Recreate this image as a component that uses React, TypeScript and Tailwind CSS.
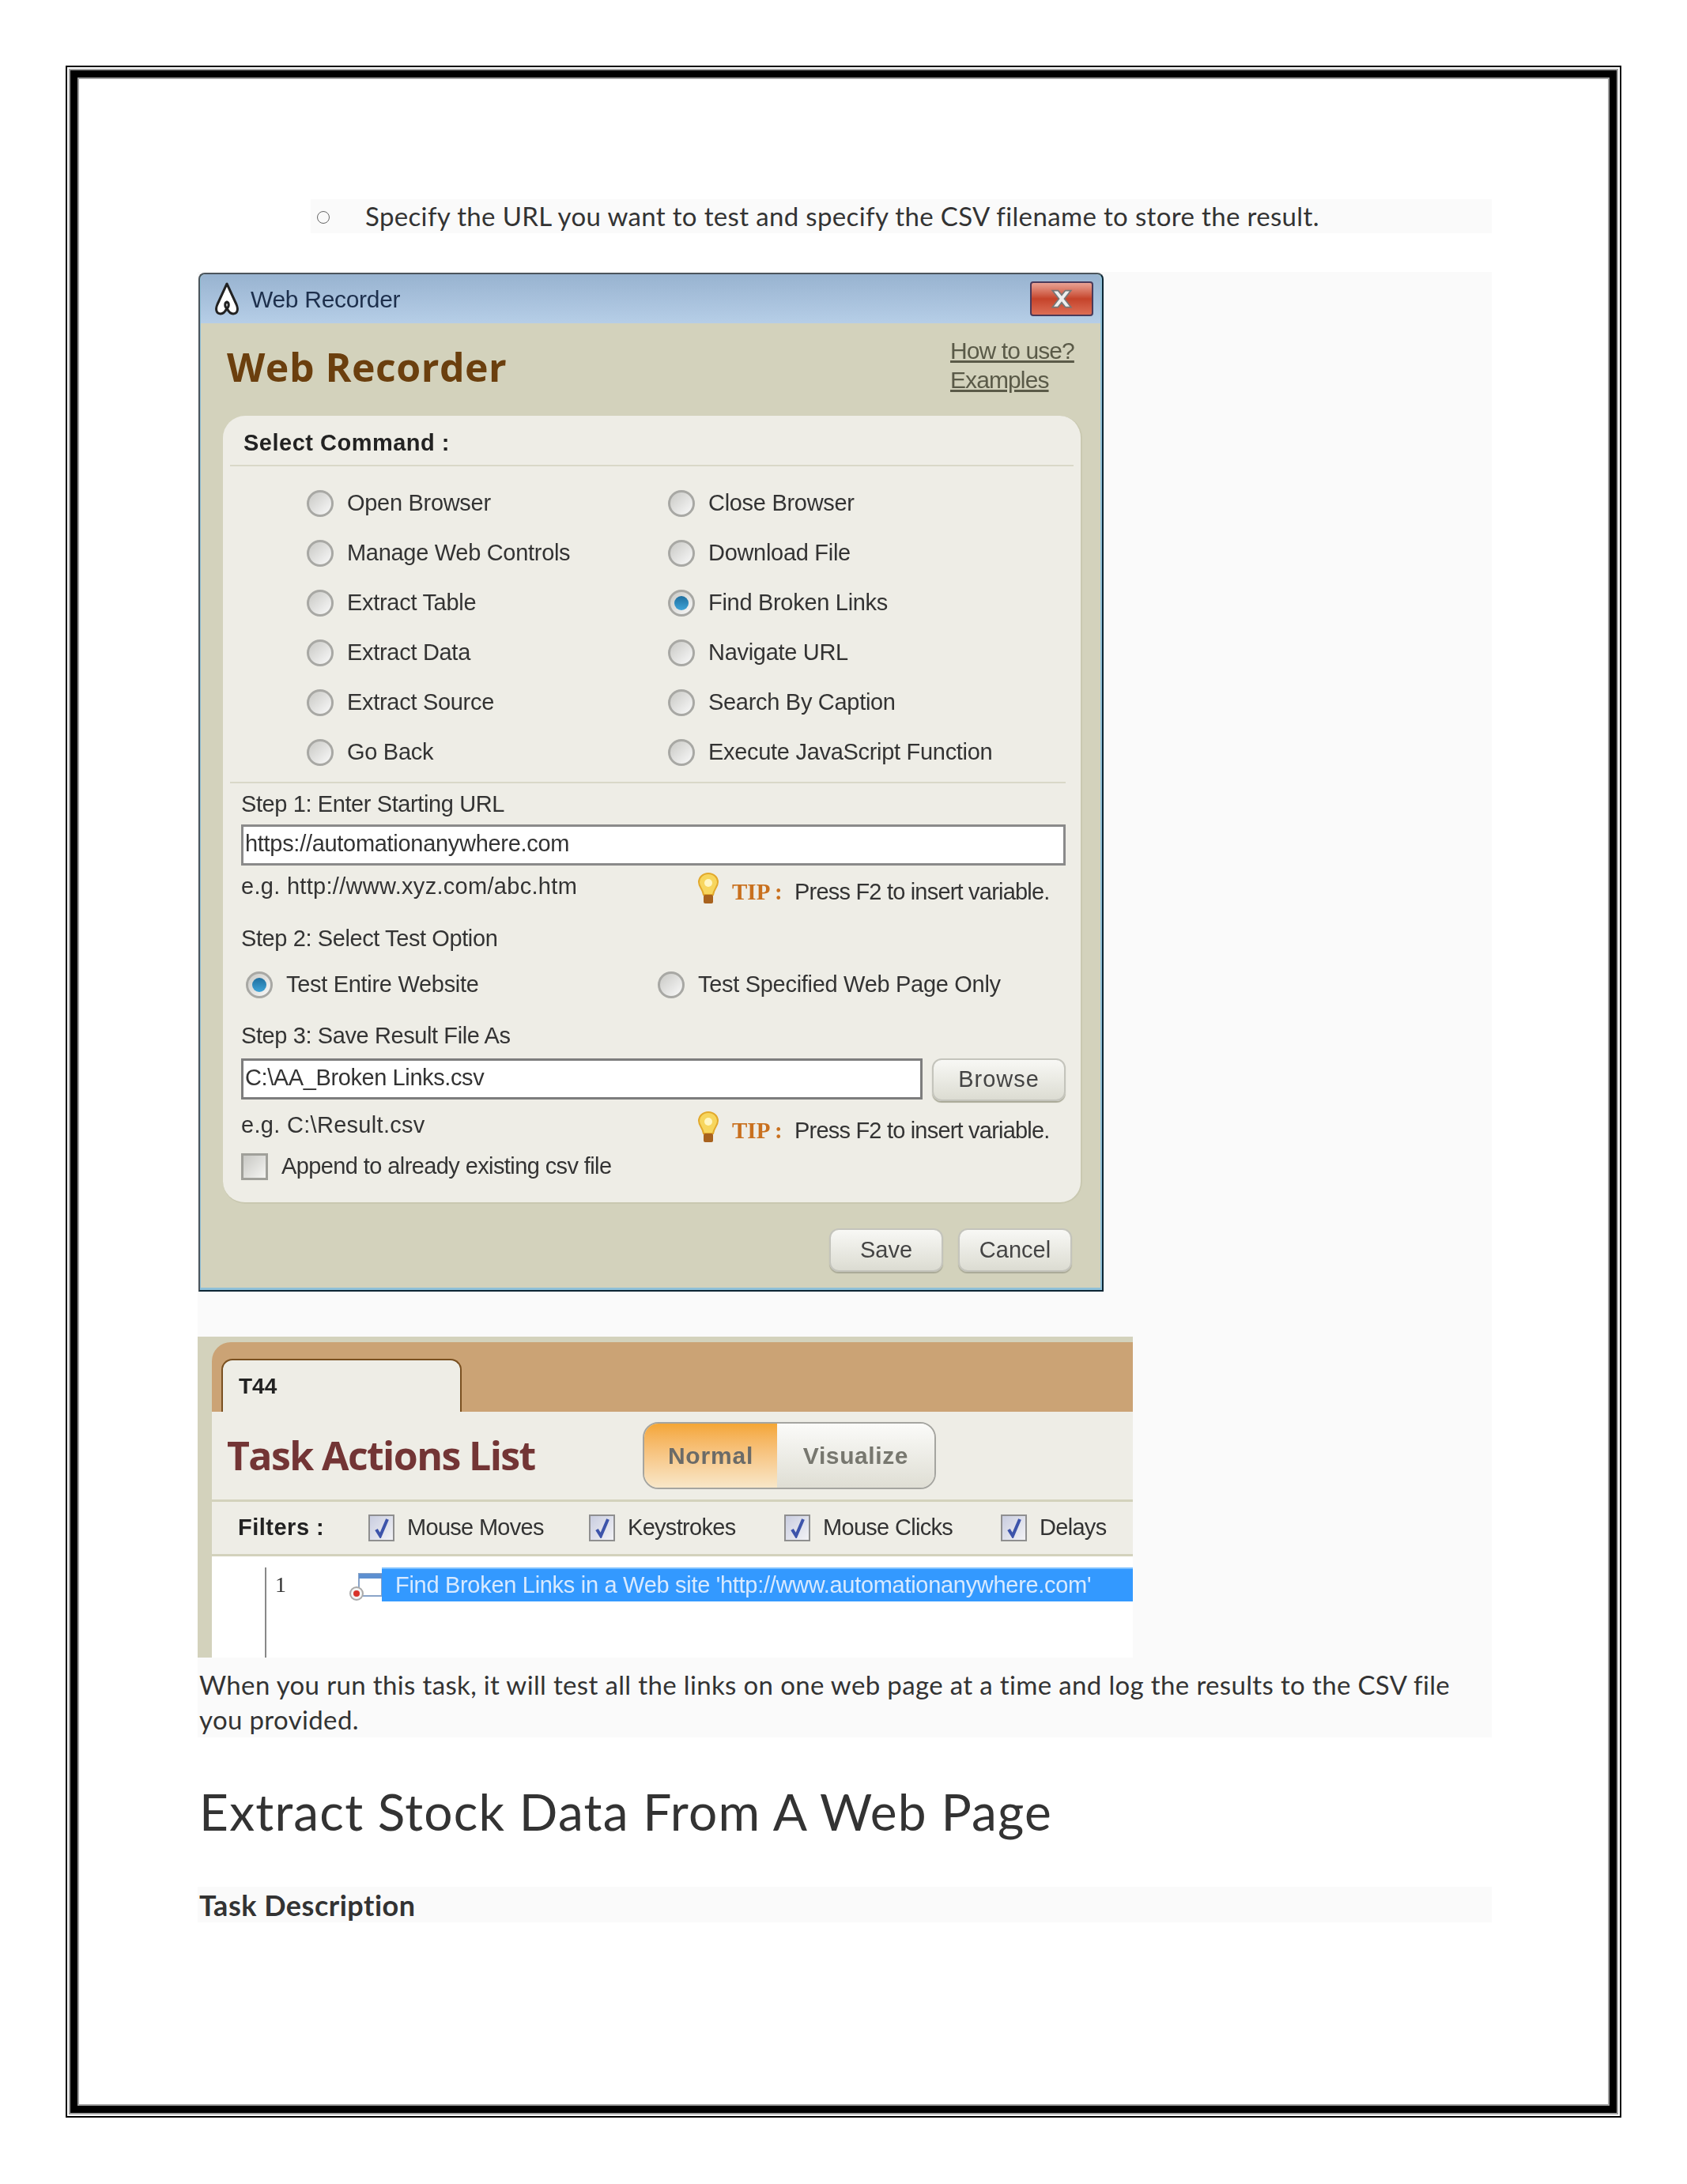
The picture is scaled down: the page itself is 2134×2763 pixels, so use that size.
import React from 'react';

const UI = "font-['Liberation_Sans',sans-serif]";
const DOC = "font-['Lato','Open_Sans',sans-serif]";

function Radio({ checked = false }: { checked?: boolean }) {
  return (
    <span className="flex h-[34px] w-[34px] shrink-0 items-center justify-center rounded-full border-[3px] border-[#a8a8a4] bg-gradient-to-br from-[#c9c9c5] to-[#fafafa]">
      {checked && <span className="h-[18px] w-[18px] rounded-full bg-gradient-to-b from-[#1f6f9f] to-[#3fa4d8]" />}
    </span>
  );
}

function RadioOption({ label, checked }: { label: string; checked?: boolean }) {
  return (
    <div className="flex items-center gap-[17px] text-[29px] tracking-[-0.3px] text-[#333]">
      <Radio checked={checked} />
      <span>{label}</span>
    </div>
  );
}

function Bulb() {
  return (
    <svg width="26" height="41" viewBox="0 0 26 41" className="shrink-0">
      <path d="M13 1C6 1 1 6 1 12c0 6 5 9 6 16h12c1-7 6-10 6-16C25 6 20 1 13 1z" fill="#f7d65e" stroke="#e2a92c" strokeWidth="2" />
      <circle cx="13" cy="13" r="5" fill="#fff6c4" />
      <rect x="7" y="28" width="12" height="11" rx="2" fill="#a8621e" />
    </svg>
  );
}

function HintRow({ example, className }: { example: string; className: string }) {
  return (
    <div className={`flex text-[29px] text-[#333] ${className}`}>
      <div className="w-[578px] pt-[6px] leading-[40px] tracking-[0.3px]">{example}</div>
      <div className="pt-[9px]"><Bulb /></div>
      <div className="ml-[17px] flex pt-[13px] leading-[40px]">
        <span className="w-[79px] font-['Liberation_Serif',serif] text-[29px] font-bold text-[#c9701e]">TIP :</span>
        <span className="tracking-[-0.8px]">Press F2 to insert variable.</span>
      </div>
    </div>
  );
}

function Btn({ label, className }: { label: string; className: string }) {
  return (
    <div className={`flex items-center justify-center rounded-[12px] border-2 border-[#c4c4bc] bg-gradient-to-b from-[#f8f8f5] to-[#dcdcd2] text-[29px] text-[#444] shadow-[0_2px_1px_#a9a997] ${className}`}>
      {label}
    </div>
  );
}

function Tick() {
  return (
    <span className="flex h-[34px] w-[33px] shrink-0 items-center justify-center border-2 border-[#8f8f8f] bg-gradient-to-br from-[#c9cde0] to-[#f2f2f5]">
      <svg width="20" height="26" viewBox="0 0 20 26">
        <path d="M3 15l5 8L17 2" fill="none" stroke="#3d54ab" strokeWidth="4" />
      </svg>
    </span>
  );
}

function Filter({ label }: { label: string }) {
  return (
    <div className="flex items-center gap-[16px]">
      <Tick />
      <span>{label}</span>
    </div>
  );
}

const commands: [string, string, boolean?][] = [
  ['Open Browser', 'Close Browser'],
  ['Manage Web Controls', 'Download File'],
  ['Extract Table', 'Find Broken Links', true],
  ['Extract Data', 'Navigate URL'],
  ['Extract Source', 'Search By Caption'],
  ['Go Back', 'Execute JavaScript Function'],
];

function WebRecorder() {
  return (
    <div className={`ml-px h-[1289px] w-[1145px] rounded-t-[8px] border-2 border-[#4c555c] border-r-[#0c2533] border-b-[#0c2533] bg-[#8fc0d8] blur-[0.6px] ${UI}`}>
      <div className="ml-[1px] h-[1282px] w-[1138px] overflow-hidden rounded-t-[6px] bg-[#d3d2bc]">
        {/* title bar */}
        <div className="flex h-[62px] items-center bg-gradient-to-b from-[#98b3d0] to-[#b6cee7] pl-[16px] pr-[9px]">
          <svg width="34" height="42" viewBox="0 0 34 42">
            <path d="M17 2L5 28c-3 7-1 12 4 12 4 0 6-3 8-7 2 4 4 7 8 7 5 0 7-5 4-12z" fill="#fff" stroke="#222" strokeWidth="3" strokeLinejoin="round" />
            <path d="M17 33c-3-2-3-7 0-8 3 1 3 6 0 8z" fill="none" stroke="#222" strokeWidth="3" />
          </svg>
          <span className="ml-[13px] text-[30px] tracking-[-0.3px] text-[#1d2f4c]">Web Recorder</span>
          <div className="ml-auto flex h-[44px] w-[80px] items-center justify-center rounded-[4px] border-2 border-[#4a3a5a] bg-gradient-to-b from-[#e8a294] via-[#c5432a] to-[#dc6d55]">
            <svg width="36" height="28" viewBox="0 0 30 24">
              <path d="M5 3h6l4 5 4-5h6l-7 9 7 9h-6l-4-5-4 5H5l7-9z" fill="#eee" stroke="#777" strokeWidth="1.5" />
            </svg>
          </div>
        </div>

        {/* header */}
        <div className="flex h-[117px] justify-between pl-[33px] pr-[34px]">
          <div className="pt-[21px] font-['Open_Sans',sans-serif] text-[50px] leading-[68px] font-bold tracking-[0.5px] text-[#6b3f0e]">Web Recorder</div>
          <div className="w-[156px] pt-[16px] text-[30px] leading-[37px] tracking-[-0.9px] whitespace-nowrap text-[#5a5a48] underline">
            <div>How to use?</div>
            <div>Examples</div>
          </div>
        </div>

        {/* main panel */}
        <div className="ml-[28px] h-[997px] w-[1087px] rounded-[28px] border-r-2 border-b-2 border-[#c9c8b0] bg-[#eeede6]">
          <div className="flex h-[62px] items-center pt-[8px] pl-[26px] text-[29px] font-bold tracking-[0.5px] text-[#222]">Select Command :</div>
          <div className="ml-[9px] h-[2px] w-[1067px] bg-[#d9d8c8]" />
          <div className="mt-[15px] grid auto-rows-[63px] grid-cols-[457px_1fr] items-center pl-[106px]">
            {commands.map(([left, right, checked]) => (
              <React.Fragment key={left}>
                <RadioOption label={left} />
                <RadioOption label={right} checked={checked} />
              </React.Fragment>
            ))}
          </div>
          <div className="mt-[6px] ml-[9px] h-[2px] w-[1057px] bg-[#d9d8c8]" />

          <div className="box-content w-[1043px] pl-[23px] text-[29px] text-[#333]">
            <div className="mt-[6px] leading-[40px] tracking-[-0.4px]">Step 1: Enter Starting URL</div>
            <div className="mt-[6px] flex h-[52px] items-center border-[3px] border-[#8a8a8a] bg-white pl-[2px] pb-[2px] text-[29px] tracking-[-0.3px]">https://automationanywhere.com</div>
            <HintRow example="e.g. http://www.xyz.com/abc.htm" className="h-[72px]" />
            <div className="leading-[40px] tracking-[-0.4px]">Step 2: Select Test Option</div>
            <div className="mt-[17px] grid h-[40px] grid-cols-[521px_1fr] items-center pl-[6px]">
              <RadioOption label="Test Entire Website" checked />
              <RadioOption label="Test Specified Web Page Only" />
            </div>
            <div className="mt-[26px] leading-[40px] tracking-[-0.4px]">Step 3: Save Result File As</div>
            <div className="mt-[9px] flex h-[55px] gap-[12px]">
              <div className="flex h-[52px] w-[863px] items-center border-[3px] border-[#7d7d7d] bg-white pb-[2px] pl-[2px] tracking-[-0.4px]">C:\AA_Broken Links.csv</div>
              <Btn label="Browse" className="h-[54px] w-[169px] tracking-[1px]" />
            </div>
            <HintRow example="e.g. C:\Result.csv" className="mt-[3px] h-[57px]" />
            <div className="flex items-center gap-[17px]">
              <span className="h-[34px] w-[34px] border-[3px] border-[#a0a09a] bg-gradient-to-br from-[#c8c8c4] to-[#f5f5f2]" />
              <span className="tracking-[-0.6px]">Append to already existing csv file</span>
            </div>
          </div>
        </div>

        {/* footer */}
        <div className="flex justify-end gap-[19px] pt-[31px] pr-[36px]">
          <Btn label="Save" className="h-[55px] w-[144px]" />
          <Btn label="Cancel" className="h-[55px] w-[144px]" />
        </div>
      </div>
    </div>
  );
}

function TaskActions() {
  return (
    <div className={`mt-[57px] h-[406px] w-[1183px] bg-[#d3d2bc] pt-[7px] pl-[18px] blur-[0.6px] ${UI}`}>
      <div className="h-[88px] rounded-tl-[24px] bg-[#cba375] pt-[21px] pl-[12px]">
        <div className="flex h-[67px] w-[304px] items-center rounded-t-[14px] border-x-2 border-t-2 border-[#7a5020] bg-[#eeede6] pl-[20px] text-[28px] font-bold text-[#222]">T44</div>
      </div>
      <div className="flex h-[111px] items-center bg-[#eeede6]">
        <div className="w-[545px] pl-[19px] font-['Open_Sans',sans-serif] text-[50px] font-bold tracking-[-1.6px] text-[#733535]">Task Actions List</div>
        <div className="flex h-[85px] w-[371px] overflow-hidden rounded-[20px] border-2 border-[#a5a5a0] text-[30px] font-bold">
          <div className="flex w-[168px] items-center justify-center bg-gradient-to-b from-[#f4a633] to-[#f8e7c8] tracking-[0.8px] text-[#6b6b68]">Normal</div>
          <div className="flex flex-1 items-center justify-center bg-gradient-to-b from-[#fbfbf9] to-[#dfded4] tracking-[0.6px] text-[#77776f]">Visualize</div>
        </div>
      </div>
      <div className="h-[3px] bg-[#d3d2bc]" />
      <div className="grid h-[66px] grid-cols-[198px_279px_247px_274px_1fr] items-center bg-[#eeede6] text-[29px] tracking-[-0.7px] text-[#333]">
        <div className="pl-[33px] font-bold tracking-[0.5px] text-[#222]">Filters :</div>
        <Filter label="Mouse Moves" />
        <Filter label="Keystrokes" />
        <Filter label="Mouse Clicks" />
        <Filter label="Delays" />
      </div>
      <div className="h-[3px] bg-[#d3d2bc]" />
      <div className="flex h-[128px] items-start bg-white pt-[14px] pl-[67px]">
        <div className="h-[114px] w-[2px] bg-[#888]" />
        <div className="w-[105px] pl-[11px] font-['Liberation_Serif',serif] text-[28px] leading-[43px] text-[#333]">1</div>
        <svg width="41" height="36" viewBox="0 0 41 36" className="mt-[6px] shrink-0">
          <rect x="12" y="2" width="29" height="28" fill="#fff" stroke="#8aa4c8" strokeWidth="2" />
          <rect x="12" y="2" width="29" height="6" fill="#5d8fd0" />
          <circle cx="9" cy="27" r="8" fill="#f4f4f4" stroke="#aaa" strokeWidth="2" />
          <circle cx="9" cy="27" r="4" fill="#d8332a" />
        </svg>
        <div className="flex h-[43px] flex-1 items-center border-t-2 border-[#7cc0ff] bg-[#3399ff] pl-[17px] text-[29px] tracking-[-0.3px] text-[#d8eaff]">
          Find Broken Links in a Web site 'http://www.automationanywhere.com'
        </div>
      </div>
    </div>
  );
}

export default function App() {
  return (
    <div className="h-[2763px] w-[2134px] bg-white pt-[83px] pl-[83px]">
      <div className="h-[2596px] w-[1968px] border-2 border-black p-[4px]">
        <div className="h-[2584px] w-[1956px] border-[9px] border-black shadow-[0_0_0_2px_#a0a0a0,inset_0_0_0_2px_#a0a0a0]">
          <div className={`pt-[154px] pl-[152px] text-[#333] ${DOC}`}>
            <div className="ml-[143px] flex h-[43px] w-[1494px] items-center bg-[#fafafa] text-[33px] tracking-[0.35px]">
              <span className="mt-[2px] ml-[8px] h-[16px] w-[16px] rounded-full border-[1.5px] border-[#666]" />
              <span className="ml-[45px]">Specify the URL you want to test and specify the CSV filename to store the result.</span>
            </div>

            <div className="mt-[49px] w-[1637px] bg-[#fafafa]">
              <div className="pt-px"><WebRecorder /></div>
              <TaskActions />
              <div className="h-[101px] pt-[12px] pl-[2px] text-[33px] leading-[44px] tracking-[0.35px]">
                When you run this task, it will test all the links on one web page at a time and log the results to the CSV file<br />you provided.
              </div>
            </div>

            <div className="mt-[54px] pl-[2px] text-[64px] leading-[80px] tracking-[1.2px]">Extract Stock Data From A Web Page</div>
            <div className="mt-[55px] flex h-[45px] w-[1637px] items-center bg-[#fafafa] pl-[2px] text-[36px] font-bold tracking-[0.5px]">Task Description</div>
          </div>
        </div>
      </div>
    </div>
  );
}
